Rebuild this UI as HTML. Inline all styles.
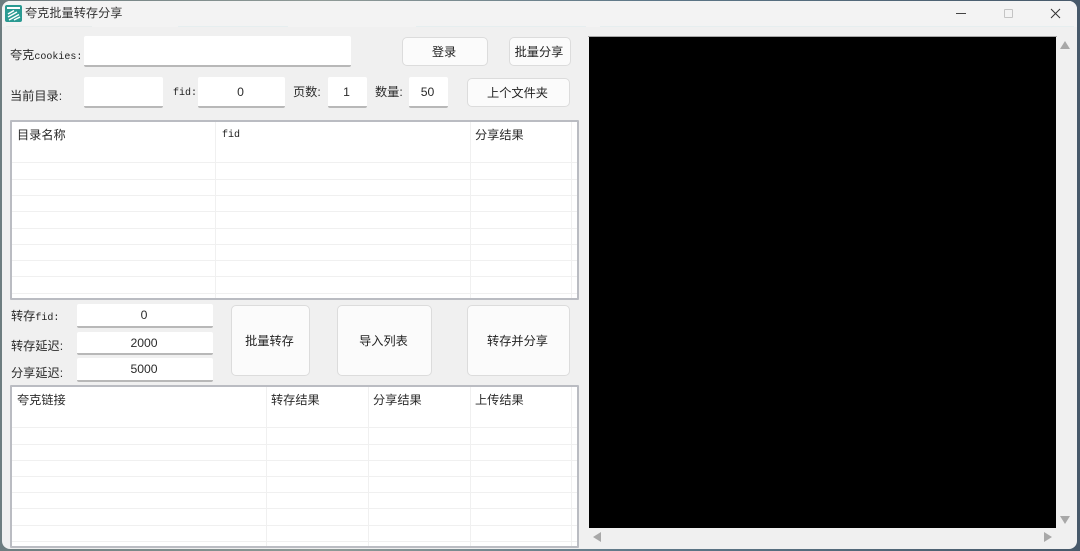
<!DOCTYPE html>
<html lang="zh-CN"><head><meta charset="utf-8"><title>夸克批量转存分享</title>
<style>
html,body{margin:0;padding:0;width:1080px;height:551px;overflow:hidden;background:#59676e}
*{box-sizing:border-box}
body{font-family:"Liberation Sans","Noto Sans CJK SC",sans-serif;font-size:12.2px;color:#2a2a2a;position:relative}
#d{position:absolute;inset:0;background:linear-gradient(90deg,#6d7d80,#8f9a97 30%,#5d7788 60%,#47596a)}
#w{position:absolute;left:2px;top:1px;width:1075px;height:548px;background:#f0f0f0;border-radius:8px;overflow:hidden}
#tb{position:absolute;left:0;top:0;width:1075px;height:26px;background:#f3f3f3}
#c{position:absolute;inset:0;filter:blur(.35px)}
.a{position:absolute;white-space:nowrap}
.in{position:absolute;background:#fff;border-bottom:2px solid #b8b8b8;border-radius:2px;text-align:center;padding-right:2px}
.b{position:absolute;background:#fbfbfb;border:1px solid #dcdcdc;border-radius:5px;text-align:center;color:#222;padding-right:2px}
.t{position:absolute;background:#fff;border:2px solid #babcc2;border-radius:1px;overflow:hidden;left:10px;width:569px}
.h{position:absolute;left:0;right:0;height:1px;background:#f0f0f0}
.v{position:absolute;width:1px;top:0;bottom:0;background:#f0f0f0}
.l{position:absolute;white-space:nowrap;line-height:16px}
.m2{font-family:"Liberation Mono",monospace;font-size:10px;color:#222}
</style></head><body>
<div id="d"></div>
<div id="w"><div id="tb"></div></div>
<div id="c">

<!-- title bar -->
<svg class="a" style="left:5px;top:5px" width="17" height="17" viewBox="0 0 17 17">
<rect width="17" height="17" rx="2" fill="#2a9a92"/>
<rect x="2" y="2" width="13" height="2" fill="#fff"/>
<path d="M3 9L9 5.500M3 12L12 7M4 15L14 9.500M9 15L15 12" stroke="#fff" stroke-width="1.500" fill="none"/>
</svg>
<div class="a" style="left:25px;top:5px;line-height:16px;color:#333">夸克批量转存分享</div>
<div class="a" style="left:956px;top:13px;width:10px;height:1px;background:#444"></div>
<div class="a" style="left:1004px;top:9px;width:9px;height:9px;border:1px solid #c4c4c4;border-radius:1px"></div>
<svg class="a" style="left:1050px;top:8px" width="11" height="11" viewBox="0 0 11 11"><path d="M1 1L10 10M10 1L1 10" stroke="#333" stroke-width="1" fill="none"/></svg>
<div class="a" style="left:6px;top:26px;width:86px;height:1px;background:#e8ecec"></div>
<div class="a" style="left:178px;top:26px;width:110px;height:1px;background:#e6eeef"></div>
<div class="a" style="left:416px;top:26px;width:170px;height:1px;background:#e6eeef"></div>
<div class="a" style="left:600px;top:26px;width:474px;height:1px;background:#e6eeef"></div>

<!-- row 1 -->
<div class="l" style="left:10px;top:47px">夸克<span class="m2">cookies:</span></div>
<div class="in" style="left:84px;top:36px;width:267px;height:31px"></div>
<div class="b" style="left:402px;top:37px;width:86px;height:29px;line-height:28px">登录</div>
<div class="b" style="left:509px;top:37px;width:62px;height:29px;line-height:28px">批量分享</div>

<!-- row 2 -->
<div class="l" style="left:10px;top:88px">当前目录:</div>
<div class="in" style="left:84px;top:77px;width:79px;height:31px"></div>
<div class="l m2" style="left:173px;top:86px">fid:</div>
<div class="in" style="left:198px;top:77px;width:87px;height:31px;line-height:31px">0</div>
<div class="l" style="left:293px;top:84px">页数:</div>
<div class="in" style="left:328px;top:77px;width:39px;height:31px;line-height:31px">1</div>
<div class="l" style="left:375px;top:84px">数量:</div>
<div class="in" style="left:409px;top:77px;width:39px;height:31px;line-height:31px">50</div>
<div class="b" style="left:467px;top:78px;width:103px;height:29px;line-height:28px">上个文件夹</div>

<!-- table 1 -->
<div class="t" style="top:120px;height:180px">
<div class="h" style="top:40px"></div><div class="h" style="top:57px"></div><div class="h" style="top:73px"></div><div class="h" style="top:89px"></div><div class="h" style="top:106px"></div><div class="h" style="top:122px"></div><div class="h" style="top:138px"></div><div class="h" style="top:154px"></div><div class="h" style="top:171px"></div>
<div class="v" style="left:203px"></div><div class="v" style="left:458px"></div><div class="v" style="left:559px"></div>
<div class="a" style="left:5px;top:5px;line-height:16px">目录名称</div>
<div class="a m2" style="left:210px;top:6px;line-height:16px">fid</div>
<div class="a" style="left:463px;top:5px;line-height:16px">分享结果</div>
</div>

<!-- middle -->
<div class="l" style="left:11px;top:308px">转存<span class="m2">fid:</span></div>
<div class="l" style="left:11px;top:338px">转存延迟:</div>
<div class="l" style="left:11px;top:365px">分享延迟:</div>
<div class="in" style="left:77px;top:304px;width:136px;height:24px;line-height:23px">0</div>
<div class="in" style="left:77px;top:332px;width:136px;height:23px;line-height:23px">2000</div>
<div class="in" style="left:77px;top:358px;width:136px;height:24px;line-height:22px">5000</div>
<div class="b" style="left:231px;top:305px;width:79px;height:71px;line-height:70px">批量转存</div>
<div class="b" style="left:337px;top:305px;width:95px;height:71px;line-height:70px">导入列表</div>
<div class="b" style="left:467px;top:305px;width:103px;height:71px;line-height:70px">转存并分享</div>

<!-- table 2 -->
<div class="t" style="top:385px;height:163px">
<div class="h" style="top:40px"></div><div class="h" style="top:57px"></div><div class="h" style="top:73px"></div><div class="h" style="top:89px"></div><div class="h" style="top:105px"></div><div class="h" style="top:121px"></div><div class="h" style="top:138px"></div><div class="h" style="top:154px"></div>
<div class="v" style="left:254px"></div><div class="v" style="left:356px"></div><div class="v" style="left:458px"></div><div class="v" style="left:559px"></div>
<div class="a" style="left:5px;top:5px;line-height:16px">夸克链接</div>
<div class="a" style="left:259px;top:5px;line-height:16px">转存结果</div>
<div class="a" style="left:361px;top:5px;line-height:16px">分享结果</div>
<div class="a" style="left:463px;top:5px;line-height:16px">上传结果</div>
</div>

<!-- right pane -->
<div class="a" style="left:588px;top:36px;width:469px;height:1px;background:#a8a8a8"></div>
<div class="a" style="left:589px;top:37px;width:467px;height:491px;background:#000"></div>
<svg class="a" style="left:1060px;top:41px" width="10" height="8"><path d="M5 0L10 8H0Z" fill="#a8a8a8"/></svg>
<svg class="a" style="left:1060px;top:516px" width="10" height="8"><path d="M0 0H10L5 8Z" fill="#a8a8a8"/></svg>
<svg class="a" style="left:593px;top:532px" width="8" height="10"><path d="M8 0V10L0 5Z" fill="#a8a8a8"/></svg>
<svg class="a" style="left:1044px;top:532px" width="8" height="10"><path d="M0 0L8 5L0 10Z" fill="#a8a8a8"/></svg>
</div>
</body></html>
